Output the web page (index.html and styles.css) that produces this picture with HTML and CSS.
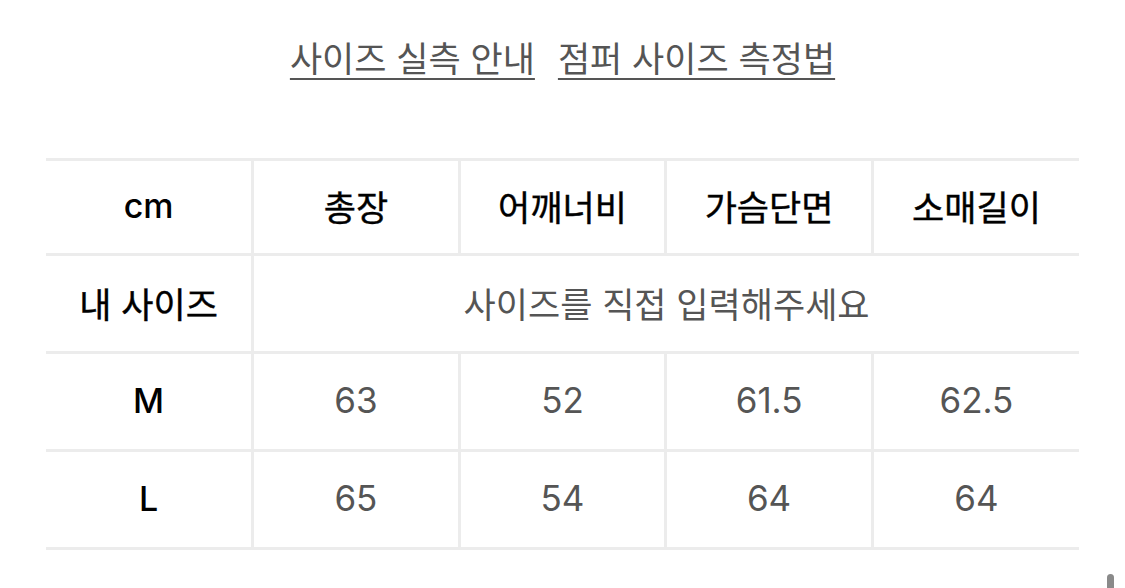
FILE: index.html
```html
<!DOCTYPE html>
<html lang="ko">
<head>
<meta charset="utf-8">
<title>사이즈 실측 안내</title>
<link rel="stylesheet" href="styles.css">
</head>
<body>
<div class="page">
  <nav class="links">
    <a class="link" href="#">사이즈 실측 안내</a>
    <a class="link" href="#">점퍼 사이즈 측정법</a>
  </nav>
  <table class="size-table">
    <tr class="row-head">
      <th class="label">cm</th>
      <th>총장</th>
      <th>어깨너비</th>
      <th>가슴단면</th>
      <th>소매길이</th>
    </tr>
    <tr>
      <th>내 사이즈</th>
      <td colspan="4" class="input-hint">사이즈를 직접 입력해주세요</td>
    </tr>
    <tr>
      <th class="label">M</th>
      <td>63</td>
      <td>52</td>
      <td>61.5</td>
      <td>62.5</td>
    </tr>
    <tr>
      <th class="label">L</th>
      <td>65</td>
      <td>54</td>
      <td>64</td>
      <td>64</td>
    </tr>
  </table>
</div>
<div class="scroll-thumb"></div>
</body>
</html>
```
FILE: styles.css
```css
html, body {
  margin: 0;
  padding: 0;
  background: #fff;
}
body {
  width: 1125px;
  height: 588px;
  overflow: hidden;
  position: relative;
  font-family: "Inter", "Noto Sans CJK KR", sans-serif;
}
.page {
  display: flex;
  flex-direction: column;
  align-items: center;
  padding-top: 33px;
}
.links {
  display: flex;
  gap: 23px;
  font-family: "Noto Sans CJK KR", sans-serif;
  font-size: 35px;
  line-height: 48px;
}
.link {
  color: #555;
  text-decoration: underline;
  text-decoration-thickness: 2px;
  text-underline-offset: 6px;
}
.size-table {
  margin-top: 77px;
  width: 1033px;
  border-collapse: collapse;
  table-layout: fixed;
}
.size-table th,
.size-table td {
  border: 3px solid #ececec;
  text-align: center;
  vertical-align: middle;
  padding: 0 0 3px;
  height: 92px;
}
.size-table .row-head th {
  height: 89px;
}
.size-table tr > :first-child { border-left: none; }
.size-table tr > :last-child { border-right: none; }
.size-table th {
  font-family: "Noto Sans CJK KR", sans-serif;
  font-weight: 400;
  font-size: 35px;
  color: #000;
  -webkit-text-stroke: 0.4px #000;
}
.size-table th.label {
  font-family: "Inter", sans-serif;
  font-size: 34px;
  font-weight: 500;
  -webkit-text-stroke: 0;
}
.size-table td {
  font-family: "Inter", sans-serif;
  font-size: 35px;
  color: #555;
  font-weight: 400;
}
.size-table td.input-hint {
  font-family: "Noto Sans CJK KR", sans-serif;
  font-size: 35px;
}
.scroll-thumb {
  position: absolute;
  left: 1107px;
  top: 574px;
  width: 7px;
  height: 30px;
  border-radius: 4px;
  background: #8a8a8a;
}
```
